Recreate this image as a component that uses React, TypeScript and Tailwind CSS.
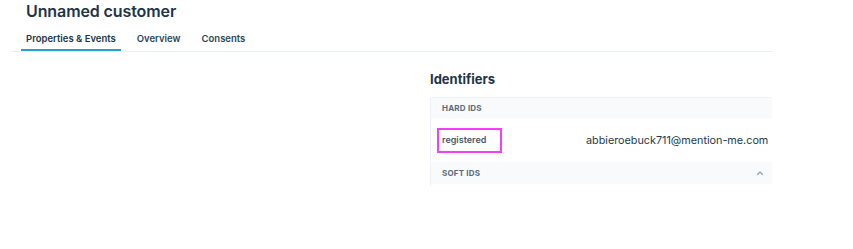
import React from "react";

const TABS = ["Properties & Events", "Overview", "Consents"];

function ChevronUp() {
  return (
    <svg width="8" height="6" viewBox="0 0 8 6" fill="none" aria-hidden>
      <path d="M1.5 4.5 4 2l2.5 2.5" stroke="#94a3b8" strokeWidth="1.3" strokeLinecap="round" strokeLinejoin="round" />
    </svg>
  );
}

export default function App(): React.ReactElement {
  return (
    <div className="w-[853px] h-[249px] bg-white font-['Inter','Noto_Sans',sans-serif] text-[#1e3447]">
      <div className="ml-3 w-[760px]">
        <h1 className="pl-[14px] pt-[1px] h-[21px] text-[16px] leading-[21px] font-semibold tracking-[-0.1px]">
          Unnamed customer
        </h1>

        {/* tabs */}
        <div className="mt-[8px] flex border-b border-[#e8eef5] pl-[9px]">
          {TABS.map((t, i) => (
            <div
              key={t}
              className={
                i === 0
                  ? "px-[5px] h-[22px] text-[9.5px] leading-[20px] font-semibold border-b-2 border-[#2b9dd6] -mb-px mr-[11px]"
                  : "px-[5px] h-[22px] text-[9.5px] leading-[20px] font-semibold text-[#2d4556] mr-[11px]"
              }
            >
              {t}
            </div>
          ))}
        </div>

        <div className="flex">
          <div className="w-[418px]" />
          <div className="w-[342px]">
            <h2 className="mt-[19px] h-[16px] text-[13px] leading-[16px] font-bold">Identifiers</h2>
            <div className="mt-[10px] border-l border-t border-[#eef2f7] rounded-tl-[2px]">
              <div className="h-[21px] bg-[#f8fafc] pl-[11px] text-[8px] leading-[20px] font-bold tracking-[0.2px] text-[#5a6b7b]">
                HARD IDS
              </div>
              <div className="h-[43px] flex items-center pl-[6px]">
                <div className="w-[65px] h-[25px] border-2 border-[#f53ff5] pl-[3px] text-[9px] leading-[20px] font-semibold text-[#475868]">
                  registered
                </div>
                <div className="ml-[84px] mt-[1px] text-[10.8px] text-[#223a4c]">
                  abbieroebuck711@mention-me.com
                </div>
              </div>
              <div className="h-[22px] bg-[#f8fafc] pl-[11px] pr-[8px] flex items-center justify-between">
                <span className="text-[8px] leading-[20px] font-bold tracking-[0.2px] text-[#5a6b7b]">SOFT IDS</span>
                <ChevronUp />
              </div>
              <div className="h-[2px]" />
            </div>
          </div>
        </div>
      </div>
    </div>
  );
}
